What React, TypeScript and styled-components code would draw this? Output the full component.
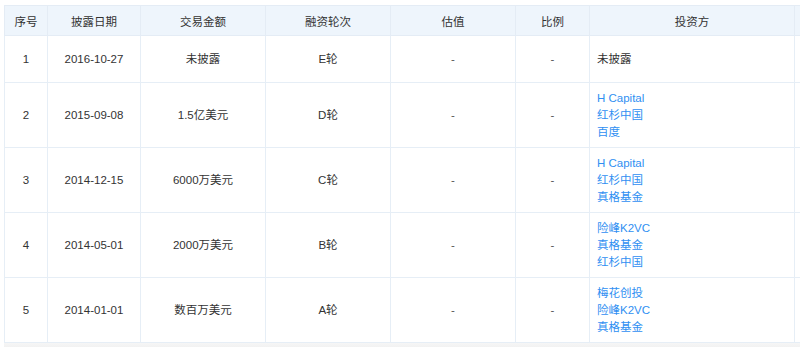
import { createGlobalStyle } from 'styled-components';
import styled from 'styled-components';

const GlobalStyle = createGlobalStyle`
  html, body {
    margin: 0;
    padding: 0;
    background: #fff;
    font-family: "Liberation Sans", "Noto Sans CJK SC", sans-serif;
  }
`;

const Page = styled.div`
  width: 800px;
  height: 347px;
  overflow: hidden;
  padding: 5px 0 0 4px;
  box-sizing: border-box;
`;

const Table = styled.table`
  border-collapse: collapse;
  table-layout: fixed;
  width: 890px;
  font-size: 11.5px;
  color: #333;
`;

const Col = styled.col<{ $w: number }>`
  width: ${(p) => p.$w}px;
`;

const HeadCell = styled.th`
  box-sizing: border-box;
  height: 30px;
  padding: 0;
  background: #eef5fc;
  border: 1px solid #e4ecf5;
  font-weight: normal;
  color: #333;
  text-align: center;
  vertical-align: middle;
`;

const Cell = styled.td<{ $left?: boolean }>`
  box-sizing: border-box;
  height: 47px;
  padding: 7px ${(p) => (p.$left ? '7px' : '4px')} 6px;
  border: 1px solid #e6eef6;
  text-align: ${(p) => (p.$left ? 'left' : 'center')};
  vertical-align: middle;
  line-height: 17px;
`;

const Dash = styled.span`
  color: #555;
`;

const Investor = styled.a`
  display: block;
  color: #2f8ff2;
  text-decoration: none;
`;

const Track = styled.div`
  height: 6px;
  background: linear-gradient(#f6f6f6, #f0f0f0);
  width: 890px;
`;

const columns = [
  { title: '序号', w: 43 },
  { title: '披露日期', w: 93 },
  { title: '交易金额', w: 125 },
  { title: '融资轮次', w: 125 },
  { title: '估值', w: 125 },
  { title: '比例', w: 74 },
  { title: '投资方', w: 205 },
  { title: '', w: 100 },
];

const rows = [
  { no: 1, date: '2016-10-27', amount: '未披露', round: 'E轮', investors: [] as string[], plain: '未披露' },
  { no: 2, date: '2015-09-08', amount: '1.5亿美元', round: 'D轮', investors: ['H Capital', '红杉中国', '百度'] },
  { no: 3, date: '2014-12-15', amount: '6000万美元', round: 'C轮', investors: ['H Capital', '红杉中国', '真格基金'] },
  { no: 4, date: '2014-05-01', amount: '2000万美元', round: 'B轮', investors: ['险峰K2VC', '真格基金', '红杉中国'] },
  { no: 5, date: '2014-01-01', amount: '数百万美元', round: 'A轮', investors: ['梅花创投', '险峰K2VC', '真格基金'] },
];

export default function App() {
  return (
    <Page>
      <GlobalStyle />
      <Table>
        <colgroup>
          {columns.map((c, i) => (
            <Col key={i} $w={c.w} />
          ))}
        </colgroup>
        <thead>
          <tr>
            {columns.map((c, i) => (
              <HeadCell key={i}>{c.title}</HeadCell>
            ))}
          </tr>
        </thead>
        <tbody>
          {rows.map((r) => (
            <tr key={r.no}>
              <Cell>{r.no}</Cell>
              <Cell>{r.date}</Cell>
              <Cell>{r.amount}</Cell>
              <Cell>{r.round}</Cell>
              <Cell>
                <Dash>-</Dash>
              </Cell>
              <Cell>
                <Dash>-</Dash>
              </Cell>
              <Cell $left>
                {r.plain
                  ? r.plain
                  : r.investors.map((name) => (
                      <Investor key={name} href="#">
                        {name}
                      </Investor>
                    ))}
              </Cell>
              <Cell />
            </tr>
          ))}
        </tbody>
      </Table>
      <Track />
    </Page>
  );
}
